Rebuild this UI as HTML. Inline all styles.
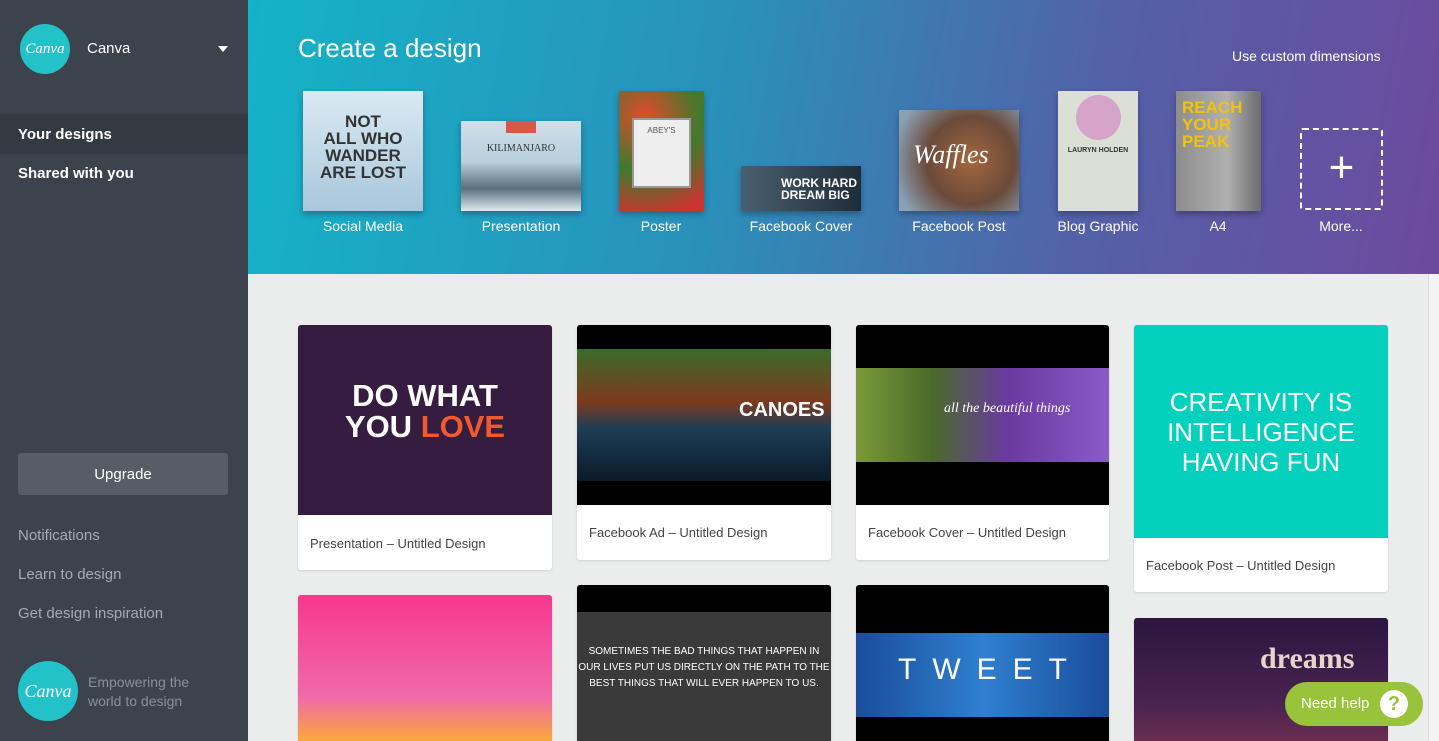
<!DOCTYPE html>
<html style="overflow:hidden;height:741px"><head><meta charset="utf-8"><style>
*{margin:0;padding:0;box-sizing:border-box}
body{width:1439px;height:741px;overflow:hidden;font-family:"Liberation Sans",sans-serif;background:#ebecec;position:relative}
.sb{position:absolute;left:0;top:0;width:248px;height:741px;background:#3d434c;color:#fff}
.abs{position:absolute}
.hdr{position:absolute;left:248px;top:0;width:1191px;height:274px;background:linear-gradient(100deg,#14b3c8 0%,#2a90ba 40%,#5361a8 70%,#6d4a9e 100%)}
.th{position:absolute;box-shadow:0 3px 6px rgba(0,0,0,.3)}
.lbl{position:absolute;top:218px;color:#fff;font-size:14px;text-align:center;width:160px}
.card{position:absolute;background:#fff;border-radius:3px;overflow:hidden;box-shadow:0 1px 2px rgba(0,0,0,.12)}
.card .t{position:absolute;left:12px;font-size:13px;color:#444}
</style></head><body>
<div class="sb">
 <div class="abs" style="left:20px;top:24px;width:50px;height:50px;border-radius:50%;background:#23c2c9;color:#fff;font:italic 15px 'Liberation Serif',serif;text-align:center;line-height:50px">Canva</div>
 <div class="abs" style="left:87px;top:40px;font-size:15px">Canva</div>
 <div class="abs" style="left:218px;top:46px;border-left:5px solid transparent;border-right:5px solid transparent;border-top:6px solid #fff"></div>
 <div class="abs" style="left:0;top:114px;width:248px;height:40px;background:#343a42"></div>
 <div class="abs" style="left:248px;top:114px;border-top:20px solid transparent;border-bottom:20px solid transparent;border-left:12px solid #343a42"></div>
 <div class="abs" style="left:18px;top:126px;font-size:15px;font-weight:bold">Your designs</div>
 <div class="abs" style="left:18px;top:165px;font-size:15px;font-weight:bold">Shared with you</div>
 <div class="abs" style="left:18px;top:453px;width:210px;height:42px;background:#565d66;border-radius:3px;text-align:center;line-height:44px;font-size:15px">Upgrade</div>
 <div class="abs" style="left:18px;top:527px;font-size:15px;color:#a5abb2">Notifications</div>
 <div class="abs" style="left:18px;top:566px;font-size:15px;color:#a5abb2">Learn to design</div>
 <div class="abs" style="left:18px;top:605px;font-size:15px;color:#a5abb2">Get design inspiration</div>
 <div class="abs" style="left:18px;top:661px;width:60px;height:60px;border-radius:50%;background:#23c2c9;font:italic 18px 'Liberation Serif',serif;text-align:center;line-height:60px">Canva</div>
 <div class="abs" style="left:88px;top:673px;font-size:14px;color:#8a9099;line-height:19px">Empowering the<br>world to design</div>
</div>
<div class="hdr">
 <div class="abs" style="left:50px;top:33px;font-size:26px;color:#fff">Create a design</div>
 <div class="abs" style="left:984px;top:48px;font-size:14px;color:#fff">Use custom dimensions</div>
 <div class="th" style="left:55px;top:91px;width:120px;height:120px;background:linear-gradient(#dbe9f2,#a9c7dc);color:#333;font:bold 17px/17px 'Liberation Sans Narrow','Liberation Sans',sans-serif;text-align:center;padding-top:22px">NOT<br>ALL WHO<br>WANDER<br>ARE LOST</div>
 <div class="th" style="left:213px;top:121px;width:120px;height:90px;background:linear-gradient(#cfe0ea 0%,#b9cfdc 45%,#5b6f7d 75%,#e0e8ee 100%);text-align:center;font:10px 'Liberation Serif',serif;color:#333;padding-top:22px"><div style="position:absolute;left:45px;top:0;width:30px;height:12px;background:#d9574a"></div>KILIMANJARO</div>
 <div class="th" style="left:371px;top:91px;width:85px;height:120px;background:radial-gradient(circle at 30% 20%,#e04a2c,#3f7a2c 50%,#c33 90%)"><div style="position:absolute;left:13px;top:27px;width:59px;height:70px;background:#eee;border:2px solid #999;font-size:8px;text-align:center;padding-top:6px;color:#555">ABEY'S</div></div>
 <div class="th" style="left:493px;top:166px;width:120px;height:45px;background:linear-gradient(90deg,#4a5f6e,#1f2d3a);color:#fff;font:bold 12px/12px 'Liberation Sans Narrow',sans-serif;padding:11px 0 0 40px">WORK HARD<br>DREAM BIG</div>
 <div class="th" style="left:651px;top:110px;width:120px;height:101px;background:radial-gradient(circle at 60% 50%,#a5673e,#6a4a3a 50%,#8aa1b4 90%);color:#fff;font:italic 26px 'Liberation Serif',serif;padding:30px 0 0 14px">Waffles</div>
 <div class="th" style="left:810px;top:91px;width:80px;height:120px;background:#dcdfd6"><div style="position:absolute;left:18px;top:4px;width:45px;height:45px;border-radius:50%;background:#d6a3c9"></div><div style="position:absolute;left:0;top:56px;width:80px;text-align:center;font:bold 7px sans-serif;color:#333">LAURYN HOLDEN</div></div>
 <div class="th" style="left:928px;top:91px;width:85px;height:120px;background:linear-gradient(90deg,#8d8d8d,#b0b0b0 60%,#6c6c6c);color:#f4c20d;font:bold 17px/17px 'Liberation Sans Narrow',sans-serif;padding:8px 0 0 6px">REACH<br>YOUR<br>PEAK</div>
 <div class="abs" style="left:1052px;top:128px;width:83px;height:82px;border:2px dashed #fff;border-radius:3px;color:#fff;font-size:44px;text-align:center;line-height:76px;font-weight:300">+</div>
 <div class="lbl" style="left:35px">Social Media</div>
 <div class="lbl" style="left:193px">Presentation</div>
 <div class="lbl" style="left:333px">Poster</div>
 <div class="lbl" style="left:473px">Facebook Cover</div>
 <div class="lbl" style="left:631px">Facebook Post</div>
 <div class="lbl" style="left:770px">Blog Graphic</div>
 <div class="lbl" style="left:890px">A4</div>
 <div class="lbl" style="left:1013px">More...</div>
</div>
<div class="abs" style="left:1428px;top:274px;width:11px;height:467px;background:#f3f3f3;border-left:1px solid #ddd"></div>

<div class="card" style="left:298px;top:325px;width:254px;height:245px">
 <div style="height:190px;background:#351c40;color:#fff;text-align:center;font:bold 31px/31px 'Liberation Sans',sans-serif;padding-top:55px">DO WHAT<br>YOU <span style="color:#f15a2b">LOVE</span></div>
 <div class="t" style="top:211px">Presentation – Untitled Design</div></div>
<div class="card" style="left:577px;top:325px;width:254px;height:235px">
 <div style="height:180px;background:#000"><div style="position:absolute;top:24px;width:254px;height:132px;background:linear-gradient(180deg,#3b6b2a,#7c3a1e 40%,#1d3d55 60%,#0c1a28);"></div><div style="position:absolute;left:162px;top:74px;color:#fff;font:bold 20px sans-serif">CANOES</div></div>
 <div class="t" style="top:200px">Facebook Ad – Untitled Design</div></div>
<div class="card" style="left:856px;top:325px;width:253px;height:235px">
 <div style="height:180px;background:#000"><div style="position:absolute;top:43px;width:253px;height:94px;background:linear-gradient(90deg,#7a9a3a,#4a6a2a 30%,#6a3aa0 60%,#8a5ac8)"></div><div style="position:absolute;left:88px;top:76px;color:#fff;font:italic 14px 'Liberation Serif',serif">all the beautiful things</div></div>
 <div class="t" style="top:200px">Facebook Cover – Untitled Design</div></div>
<div class="card" style="left:1134px;top:325px;width:254px;height:267px">
 <div style="height:213px;background:#03d1bd;color:#fff;text-align:center;font:26px/30px 'Liberation Sans Narrow',sans-serif;padding-top:62px">CREATIVITY IS<br>INTELLIGENCE<br>HAVING FUN</div>
 <div class="t" style="top:233px">Facebook Post – Untitled Design</div></div>

<div class="card" style="left:298px;top:595px;width:254px;height:146px;border-radius:3px 3px 0 0;background:linear-gradient(180deg,#f7388c,#f06aa8 70%,#f8a83a)"></div>
<div class="card" style="left:577px;top:585px;width:254px;height:156px;border-radius:3px 3px 0 0;background:#000"><div style="position:absolute;top:27px;width:254px;height:129px;background:#3a3a3a;color:#fff;text-align:center;font:10px/16px 'Liberation Sans Narrow',sans-serif;padding-top:32px;white-space:nowrap">SOMETIMES THE BAD THINGS THAT HAPPEN IN<br>OUR LIVES PUT US DIRECTLY ON THE PATH TO THE<br>BEST THINGS THAT WILL EVER HAPPEN TO US.</div></div>
<div class="card" style="left:856px;top:585px;width:253px;height:156px;border-radius:3px 3px 0 0;background:#000"><div style="position:absolute;top:48px;width:253px;height:84px;background:linear-gradient(90deg,#1a4d9a,#2f7fd0 50%,#1a4d9a);color:#fff;font:30px sans-serif;letter-spacing:16px;padding:20px 0 0 42px">TWEET</div></div>
<div class="card" style="left:1134px;top:618px;width:254px;height:123px;border-radius:3px 3px 0 0;background:linear-gradient(180deg,#2a1640,#4a2350 70%,#6a2c50)"><div style="position:absolute;left:126px;top:24px;color:#e8d4c8;font:bold 30px 'Liberation Serif',serif">dreams</div></div>
<div class="abs" style="left:1285px;top:682px;width:138px;height:44px;border-radius:22px;background:#99c33a"><span style="position:absolute;left:16px;top:13px;color:#fff;font-size:15px">Need help</span><div style="position:absolute;left:95px;top:8px;width:28px;height:28px;border-radius:50%;background:#fff;color:#99c33a;font:bold 20px/28px sans-serif;text-align:center">?</div></div>
</body></html>
